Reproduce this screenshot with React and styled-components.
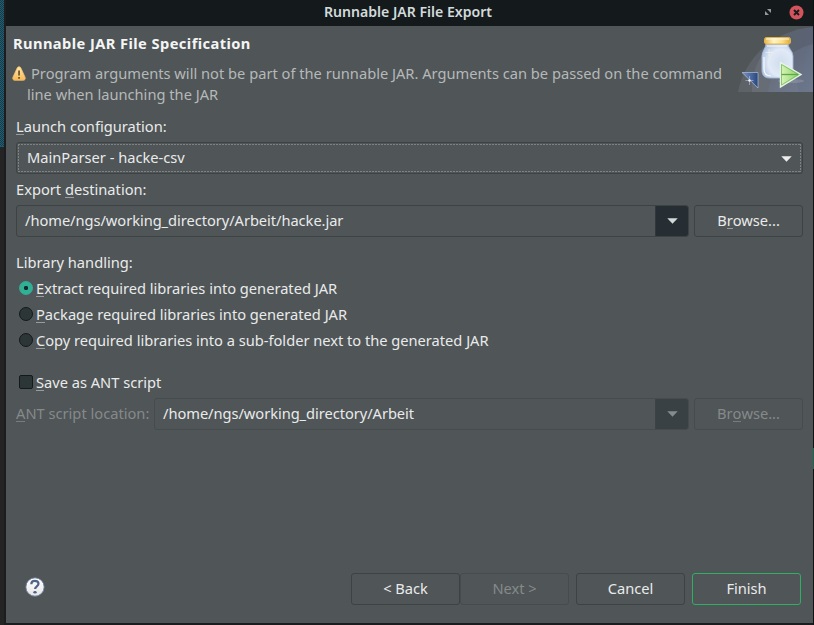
import React from 'react';
import styled, { createGlobalStyle, css } from 'styled-components';

const GlobalStyle = createGlobalStyle`
  * { box-sizing: border-box; }
  html, body { margin: 0; padding: 0; background: #1b1b1c; overflow: hidden; }
  button, input { font: inherit; color: inherit; }
`;

const Desktop = styled.div`
  display: grid;
  grid-template-columns: 4px 2px 807px 1px;
  width: 814px;
  height: 625px;
  overflow: hidden;
  background: #1b1c1e;
  font: 14.667px/20px 'Noto Sans', sans-serif;
  color: #e9ebeb;
`;

const Backdrop = styled.div`
  height: 147px;
  border-bottom: 1px solid #165a7c;
  background: repeating-conic-gradient(#17607c 0% 25%, #23393f 0% 50%) 0 0 / 2px 2px;
`;

const LeftStrip = styled.div`
  background: #242424;
`;

const Shade = styled.div`
  background: #1c1d1e;
`;

const RightStrip = styled.div`
  background: #101112;
  padding-top: 448px;
`;

const RightAccent = styled.div`
  height: 21px;
  background: #1d6650;
`;

const Dialog = styled.main`
  display: flex;
  flex-direction: column;
  height: 623px;
  background: #505557;
`;

const TitleBar = styled.header`
  display: grid;
  grid-template-columns: 58px 1fr 61px;
  height: 26px;
  flex: none;
  background: #141a1b;
`;

const Title = styled.h1`
  grid-column: 2;
  margin: 0;
  padding-top: 2px;
  text-align: center;
  font-size: 14.1px;
  font-weight: 600;
  line-height: 20px;
  color: #d3dadb;
  white-space: nowrap;
`;

const WindowControls = styled.div`
  display: flex;
  align-items: center;
  justify-content: flex-end;
  height: 24px;
  gap: 17px;
  padding-right: 9px;
`;

const Banner = styled.section`
  display: flex;
  justify-content: space-between;
  height: 90px;
  flex: none;
`;

const BannerText = styled.div`
  padding: 7px 0 0 6px;
`;

const Heading = styled.h2`
  margin: 0 0 10px 1px;
  font-size: 14.667px;
  font-weight: 700;
  line-height: 20px;
  letter-spacing: 0.42px;
  color: #f4f5f5;
  white-space: nowrap;
`;

const Message = styled.div`
  display: flex;
  height: 21px;
  line-height: 21px;
  color: #b5b9b9;
  white-space: nowrap;
  padding-left: ${(p) => p.$indent || 0}px;

  svg { flex: none; margin: 3px 4px 0 0; }
`;

const Line = styled.div`
  display: flex;
  align-items: center;
  height: 20px;
  margin-bottom: ${(p) => p.$after || 0}px;
  white-space: nowrap;
`;

const Form = styled.section`
  display: flex;
  flex-direction: column;
  flex: 1;
  padding: 0 10px;
`;

const Key = styled.span`
  box-shadow: 0 1px 0 ${(p) => (p.$dim ? '#777c7d' : '#989c9c')};
  display: inline-block;
  height: 18px;
  line-height: 20px;
  vertical-align: top;
`;

const control = css`
  border: 1px solid ${(p) => (p.$dim ? '#464b4c' : '#3d4243')};
  border-radius: 3px;
  background: #505557;
`;

const Select = styled.div`
  ${control}
  height: 32px;
  padding: 1px;
  margin-bottom: 5px;
`;

const SelectFocus = styled.div`
  display: flex;
  justify-content: space-between;
  align-items: flex-start;
  height: 28px;
  padding: 3px 9px 0 9px;
  background:
    repeating-linear-gradient(90deg, #7d8283 0 2px, transparent 2px 3px) top / 100% 1px no-repeat,
    repeating-linear-gradient(90deg, #7d8283 0 2px, transparent 2px 3px) bottom / 100% 1px no-repeat,
    repeating-linear-gradient(#7d8283 0 2px, transparent 2px 3px) left / 1px 100% no-repeat,
    repeating-linear-gradient(#7d8283 0 2px, transparent 2px 3px) right / 1px 100% no-repeat;

  svg { margin-top: 9px; }
`;

const FieldRow = styled.div`
  display: flex;
  align-items: center;
  height: 32px;
  gap: 5px;
  margin-bottom: ${(p) => p.$after || 0}px;
`;

const Combo = styled.div`
  ${control}
  display: flex;
  flex: 1;
  height: 32px;
  overflow: hidden;
`;

const ComboText = styled.div`
  flex: 1;
  padding: 4px 0 0 8px;
  letter-spacing: -0.05px;
  white-space: nowrap;
`;

const ComboArrow = styled.div`
  display: flex;
  align-items: center;
  justify-content: center;
  width: 33px;
  border-left: 1px solid ${(p) => (p.$dim ? '#3e4446' : '#31383b')};
  background: ${(p) => (p.$dim ? '#3a4144' : '#272e33')};
`;

const Button = styled.button`
  ${control}
  width: 109px;
  height: 32px;
  flex: none;
  padding: 0 0 2px;
  line-height: 20px;
  letter-spacing: -0.02px;
  white-space: nowrap;
  color: ${(p) => (p.$dim ? '#858a8b' : '#e9ebeb')};
  ${(p) => p.$primary && 'border-color: #2fae65;'}
`;

const DimLabel = styled.div`
  width: 133px;
  flex: none;
  height: 20px;
  margin-top: -2px;
  color: #858a8b;
  white-space: nowrap;
`;

const Options = styled.div`
  display: flex;
  flex-direction: column;
  gap: 6px;
  margin-bottom: 22px;
`;

const Option = styled.label`
  display: flex;
  height: 20px;
  padding-left: 3px;
  gap: 3px;
  letter-spacing: -0.015px;
  white-space: nowrap;
`;

const Radio = styled.span`
  display: flex;
  align-items: center;
  justify-content: center;
  width: 14px;
  height: 14px;
  margin-top: 3px;
  border-radius: 50%;
  border: 1px solid ${(p) => (p.$on ? '#30ad94' : '#14191a')};
  background: ${(p) => (p.$on ? 'radial-gradient(circle, #172a26 0 1.8px, #30b197 2.5px)' : '#2c3636')};
`;

const Check = styled.span`
  width: 14px;
  height: 14px;
  margin-top: 3px;
  border: 1px solid #14191a;
  border-radius: 2px;
  background: #2c3636;
`;

const Footer = styled.footer`
  display: flex;
  align-items: center;
  height: 32px;
  margin-bottom: 18px;
  padding: 0 12px 0 19px;
  flex: none;
`;

const FooterButtons = styled.div`
  display: flex;
  gap: 7px;
  margin-left: auto;
`;

const Pager = styled.div`
  display: flex;
`;

const HelpSpot = styled.div`
  height: 20px;
  margin-top: -4px;
`;

const Arrow = ({ color = '#eceeee' }) => (
  <svg width="11" height="6" viewBox="0 0 11 6">
    <path d="M.3.3H10.7L5.5 5.7Z" fill={color} />
  </svg>
);

const Warning = () => (
  <svg width="15" height="16" viewBox="0 0 15 16">
    <defs>
      <linearGradient id="warn" x2="0" y2="1">
        <stop stopColor="#ffe9ae" />
        <stop offset="1" stopColor="#f8b754" />
      </linearGradient>
    </defs>
    <path d="M7 .8c.9 0 1.500.5 1.900 1.300l4.100 9c.8 1.700-.1 3.200-1.800 3.200H2.800C1.100 14.300.2 12.800 1 11.100l4.100-9C5.500 1.300 6.100.8 7 .8Z" fill="url(#warn)" stroke="#f3bd6c" strokeWidth=".8" />
    <path d="M6.200 4.500h1.700v5H6.200zM6.200 11h1.700v1.700H6.200z" fill="#69502a" />
  </svg>
);

const Help = () => (
  <svg width="20" height="20" viewBox="0 0 20 20">
    <defs>
      <linearGradient id="help" x2="0" y2="1">
        <stop stopColor="#fff" />
        <stop offset="1" stopColor="#e4e4e5" />
      </linearGradient>
    </defs>
    <circle cx="10" cy="10" r="9.200" fill="url(#help)" stroke="#677896" strokeWidth=".9" />
    <path d="M6.300 7.200C6.300 4.800 7.800 3.900 9.800 3.900c2.200 0 3.700 1 3.700 2.900 0 2.700-3.400 2.500-3.400 5.300" fill="none" stroke="#506288" strokeWidth="2.200" />
    <ellipse cx="10" cy="15.200" rx="1.700" ry="1.300" fill="#506288" />
  </svg>
);

const Maximize = () => (
  <svg width="8" height="8" viewBox="0 0 8 8">
    <path d="M3 1H7V5ZM1 3V7H5Z" fill="#929a9b" />
  </svg>
);

const Close = () => (
  <svg width="15" height="15" viewBox="0 0 15 15">
    <circle cx="7.500" cy="7.500" r="7" fill="#d3545c" />
    <path d="m5 5 5 5m0-5-5 5" stroke="#191b1d" strokeWidth="1.900" />
  </svg>
);

const JarBanner = () => (
  <svg width="75" height="66" viewBox="0 0 75 66">
    <defs>
      <linearGradient id="sky" x1="0" x2="1">
        <stop stopColor="#777b85" stopOpacity=".7" />
        <stop offset="1" stopColor="#647092" />
      </linearGradient>
      <linearGradient id="skyInner" x1="0" y1="0" x2="1" y2="1">
        <stop stopColor="#5c6474" />
        <stop offset="1" stopColor="#7d89a3" />
      </linearGradient>
      <linearGradient id="lid">
        <stop stopColor="#e8b545" />
        <stop offset=".35" stopColor="#fff4c6" />
        <stop offset=".7" stopColor="#fbdc83" />
        <stop offset="1" stopColor="#dba936" />
      </linearGradient>
      <radialGradient id="glass" cx=".6" cy=".55" r=".65">
        <stop stopColor="#d0dcee" />
        <stop offset=".6" stopColor="#e1eaf6" />
        <stop offset="1" stopColor="#b3c6e1" />
      </radialGradient>
      <linearGradient id="corner">
        <stop stopColor="#7795c7" />
        <stop offset="1" stopColor="#29457f" />
      </linearGradient>
      <linearGradient id="play">
        <stop stopColor="#dbf5ba" />
        <stop offset="1" stopColor="#80ce60" />
      </linearGradient>
    </defs>
    <path d="M0 66C7 30 38 4 75 1V66Z" fill="url(#sky)" opacity=".5" />
    <path d="M14 66C13 44 23 25 39 15 52 28 59 45 60 66Z" fill="#969da6" opacity=".18" />
    <path d="M30 66C34 42 49 25 75 18V66Z" fill="url(#skyInner)" opacity=".55" />
    <ellipse cx="53" cy="55" rx="13" ry="2" fill="#929bab" opacity=".5" />
    <path d="M28 18H50C50 22 55 25 55 30V45C55 50 51 52 46 52H32C26 52 24 49 24 44V30C24 25 28 22 28 18Z" fill="url(#glass)" stroke="#a3b8d8" strokeWidth=".9" />
    <path d="M29 20H49M26 31V43C26 48 29 50 33 50" fill="none" stroke="#f6faff" strokeWidth="1.200" />
    <rect x="26.500" y="11.500" width="26" height="6.500" rx="2" fill="url(#lid)" stroke="#e0b24e" />
    <path d="M28 13H51" stroke="#fff8d8" strokeWidth="1" />
    <path d="M31 23v7m-3.500-3.500h7" stroke="#fffbe6" strokeWidth=".9" opacity=".6" />
    <path d="M4 46.500H20V62Z" fill="url(#corner)" stroke="#aebfdb" strokeWidth=".7" />
    <path d="M11.500 50v9M7.500 54.500h8" stroke="#d4dce9" strokeWidth=".8" opacity=".6" />
    <circle cx="11.500" cy="54.500" r="1.200" fill="#f2f5fa" />
    <path d="M42.500 36.500V61L63 48.500Z" fill="url(#play)" stroke="#e6f3e2" strokeWidth="1.400" />
    <path d="M43.500 38.500V59L60.500 48.500Z" fill="none" stroke="#76b863" strokeWidth=".8" />
    <path d="M43.500 48.500H60" stroke="#5da94a" strokeWidth="1.300" />
  </svg>
);

export default function App() {
  return (
    <Desktop>
      <GlobalStyle />
      <LeftStrip><Backdrop /></LeftStrip>
      <Shade />
      <Dialog>
        <TitleBar>
          <Title>Runnable JAR File Export</Title>
          <WindowControls><Maximize /><Close /></WindowControls>
        </TitleBar>
        <Banner>
          <BannerText>
            <Heading>Runnable JAR File Specification</Heading>
            <Message>
              <Warning />
              <span>Program arguments will not be part of the runnable JAR. Arguments can be passed on the command</span>
            </Message>
            <Message $indent={15}>line when launching the JAR</Message>
          </BannerText>
          <JarBanner />
        </Banner>
        <Form>
          <Line $after={6}><span><Key>L</Key>aunch configuration:</span></Line>
          <Select>
            <SelectFocus><span>MainParser - hacke-csv</span><Arrow /></SelectFocus>
          </Select>
          <Line $after={6}><span>Export <Key>d</Key>estination:</span></Line>
          <FieldRow $after={15}>
            <Combo>
              <ComboText>/home/ngs/working_directory/Arbeit/hacke.jar</ComboText>
              <ComboArrow><Arrow color="#d3dada" /></ComboArrow>
            </Combo>
            <Button>B<Key>r</Key>owse...</Button>
          </FieldRow>
          <Line $after={6}>Library handling:</Line>
          <Options>
            <Option><Radio $on /><span><Key>E</Key>xtract required libraries into generated JAR</span></Option>
            <Option><Radio /><span><Key>P</Key>ackage required libraries into generated JAR</span></Option>
            <Option><Radio /><span><Key>C</Key>opy required libraries into a sub-folder next to the generated JAR</span></Option>
          </Options>
          <Line $after={6}>
            <Option><Check /><span><Key>S</Key>ave as ANT script</span></Option>
          </Line>
          <FieldRow>
            <DimLabel><Key $dim>A</Key>NT script location:</DimLabel>
            <Combo $dim>
              <ComboText>/home/ngs/working_directory/Arbeit</ComboText>
              <ComboArrow $dim><Arrow color="#858c8d" /></ComboArrow>
            </Combo>
            <Button $dim>Br<Key $dim>o</Key>wse...</Button>
          </FieldRow>
        </Form>
        <Footer>
          <HelpSpot><Help /></HelpSpot>
          <FooterButtons>
            <Pager><Button>&lt; Back</Button><Button $dim>Next &gt;</Button></Pager>
            <Button>Cancel</Button>
            <Button $primary>Finish</Button>
          </FooterButtons>
        </Footer>
      </Dialog>
      <RightStrip><RightAccent /></RightStrip>
    </Desktop>
  );
}
